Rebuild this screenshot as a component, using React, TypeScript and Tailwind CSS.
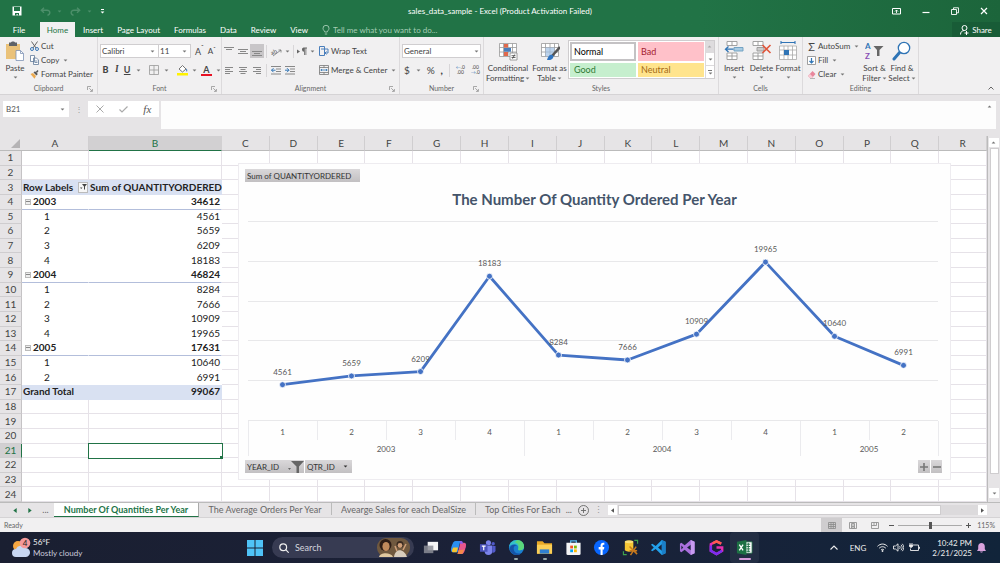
import type { ReactNode } from 'react';

const COLUMNS = ['A', 'B', 'C', 'D', 'E', 'F', 'G', 'H', 'I', 'J', 'K', 'L', 'M', 'N', 'O', 'P', 'Q', 'R'];

type PivotRow = { kind: 'head' | 'year' | 'quarter' | 'total'; label: string; value: string };

const YEARS = [
    { year: '2003', total: 34612, quarters: [4561, 5659, 6209, 18183] },
    { year: '2004', total: 46824, quarters: [8284, 7666, 10909, 19965] },
    { year: '2005', total: 17631, quarters: [10640, 6991] },
];

const PIVOT: PivotRow[] = [
    { kind: 'head', label: 'Row Labels', value: 'Sum of QUANTITYORDERED' },
    ...YEARS.flatMap((y): PivotRow[] => [
        { kind: 'year', label: y.year, value: String(y.total) },
        ...y.quarters.map((q, i): PivotRow => ({ kind: 'quarter', label: String(i + 1), value: String(q) })),
    ]),
    { kind: 'total', label: 'Grand Total', value: '99067' },
];

function Caret({ className = 'text-[#777]' }: { className?: string }) {
    return (
        <svg className={`h-[3px] w-[5px] shrink-0 ${className}`} viewBox="0 0 5 3" fill="currentColor" aria-hidden="true">
            <path d="M0.6 0.4h3.800L2.500 2.400z" />
        </svg>
    );
}

function Launcher() {
    return (
        <svg className="h-[6px] w-[6px]" viewBox="0 0 6 6" fill="none" stroke="#888" strokeWidth="0.7">
            <path d="M0.5 4V0.5H4M2.2 2.2l3 3M5.4 3v2.4H3" />
        </svg>
    );
}

interface GroupProps {
    label: string;
    className: string;
    launcher?: boolean;
    children: ReactNode;
}

function Group({ label, className, launcher, children }: GroupProps) {
    return (
        <section aria-label={label} className={`flex shrink-0 flex-col border-r border-[#dcdadc] ${className}`}>
            <div className="flex flex-1 pt-[2px]">{children}</div>
            <div className="grid h-[11px] grid-cols-[10px_1fr_10px] items-center text-center text-[7px] text-[#666]">
                <span />
                <span>{label}</span>
                {launcher && (
                    <button aria-label={`${label} settings`}>
                        <Launcher />
                    </button>
                )}
            </div>
        </section>
    );
}

function SmallButton({ icon, label, caret }: { icon: ReactNode; label: string; caret?: boolean }) {
    return (
        <button className="flex h-[14px] items-center gap-[2px] whitespace-nowrap">
            {icon}
            <span>{label}</span>
            {caret && <span className="pl-[2px]"><Caret /></span>}
        </button>
    );
}

function BigButton({ icon, lines, caretBelow, className }: { icon: ReactNode; lines: string[]; caretBelow?: boolean; className: string }) {
    return (
        <button className={`flex flex-col items-center pt-[2px] leading-[10px] ${className}`}>
            <span className="mb-[2px] flex h-5 items-center">{icon}</span>
            {lines.map((line, i) => (
                <span key={line} className="flex items-center gap-px whitespace-nowrap">
                    {line}
                    {!caretBelow && i === lines.length - 1 && <Caret />}
                </span>
            ))}
            {caretBelow && <span className="pt-[3px]"><Caret /></span>}
        </button>
    );
}

function Divider() {
    return <span className="h-[13px] w-px bg-[#d8d6d8]" />;
}

function AlignIcon({ lines, className = '' }: { lines: string; className?: string }) {
    return (
        <button aria-label="Align" className={`flex h-[14px] w-[14px] items-center justify-center ${className}`}>
            <svg width="10" height="10" viewBox="0 0 10 10" stroke="#888" strokeWidth="1"><path d={lines} /></svg>
        </button>
    );
}

function TableIcon({ children }: { children?: ReactNode }) {
    return (
        <svg width="20" height="20" viewBox="0 0 20 20" fill="none">
            <path d="M1.5 2.5h17v13h-17zM1.5 6.5h17M1.5 11h17M5.5 2.5v13M10 2.5v13M14.5 2.5v13" fill="#fff" stroke="#999" strokeWidth="0.8" />
            {children}
        </svg>
    );
}

function TitleBar() {
    return (
        <div className="grid h-[22px] grid-cols-[1fr_auto_1fr] items-center">
            <div className="flex items-center pl-3">
                <button aria-label="Save" className="mr-[18px]">
                    <svg width="10" height="10" viewBox="0 0 10 10"><path d="M0.5 0.5h9v9h-9z" fill="#fff" /><path d="M2 1h6v4H2zM3 7h4v2.5H5.8V8H4.5v1.5H3z" fill="#217346" /></svg>
                </button>
                <button aria-label="Undo" className="flex items-center gap-[6px] text-[#4c8f6a]">
                    <svg width="11" height="9" viewBox="0 0 11 9" fill="none" stroke="currentColor" strokeWidth="1.4"><path d="M4 0.7L1.3 3.2 4 5.8M1.5 3.2H7c4 0 3.400 4.500 0.500 5" /></svg>
                    <Caret className="text-[#4c8f6a]" />
                </button>
                <button aria-label="Redo" className="ml-2 flex items-center gap-[6px] text-[#4c8f6a]">
                    <svg width="11" height="9" viewBox="0 0 11 9" fill="none" stroke="currentColor" strokeWidth="1.4"><path d="M7 0.7l2.700 2.500L7 5.800M9.500 3.200H4c-4 0-3.400 4.500-0.500 5" /></svg>
                    <Caret className="text-[#4c8f6a]" />
                </button>
                <button aria-label="Customize toolbar" className="ml-2 flex flex-col items-center gap-px">
                    <span className="h-px w-[3px] bg-white" />
                    <Caret className="text-white" />
                </button>
            </div>
            <h1 className="text-[8px]">sales_data_sample - Excel (Product Activation Failed)</h1>
            <div className="flex items-center justify-end gap-[21px] pr-3 text-white">
                <button aria-label="Ribbon display options">
                    <svg width="9" height="8" viewBox="0 0 9 8" fill="none" stroke="currentColor"><path d="M0.500 1.500h8v5.500h-8z" /><path d="M4.500 6V3M3 4.500l1.500-1.500L6 4.500" strokeWidth="0.9" /></svg>
                </button>
                <button aria-label="Minimize"><svg width="8" height="8" viewBox="0 0 8 8"><path d="M0.500 5.500h7" stroke="currentColor" strokeWidth="1.200" /></svg></button>
                <button aria-label="Restore">
                    <svg width="8" height="8" viewBox="0 0 8 8" fill="none" stroke="currentColor" strokeWidth="0.900"><path d="M0.500 2.500h5v5h-5zM2.500 2.500V0.800h5v5H5.500" /></svg>
                </button>
                <button aria-label="Close"><svg width="8" height="8" viewBox="0 0 8 8"><path d="M1 1l6 6M7 1L1 7" stroke="currentColor" strokeWidth="1.200" /></svg></button>
            </div>
        </div>
    );
}

function RibbonTabs() {
    const after = ['Insert', 'Page Layout', 'Formulas', 'Data', 'Review', 'View'];
    return (
        <nav className="flex h-[15px] items-stretch text-[8px]">
            <button className="w-10 pr-[2px]">File</button>
            <button className="w-[35px] bg-[#f1f1f1] text-[#217346]">Home</button>
            <div className="ml-2 flex items-center gap-[14px]">
                {after.map((t) => <button key={t}>{t}</button>)}
                <label className="flex items-center gap-[3px] text-[#a5cdb5]">
                    <svg width="8" height="10" viewBox="0 0 8 10" fill="none" stroke="currentColor" strokeWidth="0.900"><path d="M2.700 7C2.700 5.700 1 5.200 1 3.300a3 3 0 0 1 6 0C7 5.200 5.300 5.700 5.300 7zM2.800 9h2.400" /></svg>
                    <input className="w-[120px] bg-transparent outline-none placeholder:text-[#a5cdb5]" placeholder="Tell me what you want to do..." />
                </label>
            </div>
            <button className="ml-auto flex w-12 items-center justify-center gap-[3px] bg-[#185c37]">
                <svg width="9" height="10" viewBox="0 0 9 10" fill="none" stroke="#fff" strokeWidth="1"><circle cx="4.500" cy="3" r="2.500" /><path d="M0.500 9.500C0.500 7 2 5.500 4.500 5.500M6.500 6v4M4.500 8h4" /></svg>
                Share
            </button>
        </nav>
    );
}

function Ribbon() {
    return (
        <div className="flex h-[58px] overflow-hidden border-b border-[#d5d3d5] bg-[#f1f0f1] text-[8px] text-[#444]">
            <Group label="Clipboard" className="w-[98px]" launcher>
                <BigButton
                    className="w-[30px]"
                    lines={['Paste']}
                    caretBelow
                    icon={
                        <svg width="18" height="20" viewBox="0 0 18 20">
                            <path d="M0 3h14v15H0z" fill="#eac27a" /><path d="M3 1.500h2C5.200 0.300 8.800 0.300 9 1.500h2V5H3z" fill="#5f6368" />
                            <path d="M10 9.500h4.500l3 3V19.500H10z" fill="#fff" stroke="#7f93b5" strokeWidth="0.800" /><path d="M14.500 9.500v3h3" fill="none" stroke="#7f93b5" strokeWidth="0.800" />
                        </svg>
                    }
                />
                <div className="flex flex-col items-start">
                    <SmallButton label="Cut" icon={<svg width="9" height="10" viewBox="0 0 9 10" fill="none"><path d="M1.500 0.500L6 7M7.500 0.500L3 7" stroke="#666" /><circle cx="2" cy="8" r="1.500" stroke="#3b78b8" /><circle cx="7" cy="8" r="1.500" stroke="#3b78b8" /></svg>} />
                    <SmallButton label="Copy" caret icon={<svg width="9" height="10" viewBox="0 0 9 10" fill="#fff" stroke="#5f7899" strokeWidth="0.800"><path d="M0.500 0.500h4v6h-4zM3.500 3h3l2 2v4.500h-5z" /><path d="M4.500 6h3M4.500 7.500h3" /></svg>} />
                    <SmallButton label="Format Painter" icon={<svg width="9" height="9" viewBox="0 0 9 9"><path d="M0.500 4L3 3l3 3-1.500 2.800z" fill="#eba94f" /><path d="M3.500 2.500L5 1.200l2.800 2.800L6.500 5.500z" fill="#555" /><path d="M6.300 2.500L8 0.500" stroke="#555" strokeWidth="1.500" /></svg>} />
                </div>
            </Group>

            <Group label="Font" className="w-[124px]" launcher>
                <div className="flex w-full flex-col gap-[5px] pl-[2px] pt-[5px]">
                    <div className="flex items-center">
                        <label className="relative flex items-center">
                            <select aria-label="Font name" className="h-[14px] w-[59px] appearance-none border border-[#d0ced0] bg-white pl-px"><option>Calibri</option></select>
                            <span className="pointer-events-none absolute right-1"><Caret /></span>
                        </label>
                        <label className="relative flex items-center">
                            <select aria-label="Font size" className="h-[14px] w-8 appearance-none border border-l-0 border-[#d0ced0] bg-white pl-px"><option>11</option></select>
                            <span className="pointer-events-none absolute right-1"><Caret /></span>
                        </label>
                        <button className="ml-1 text-[9px] leading-none">A<sup>ˆ</sup></button>
                        <button className="ml-1 text-[8px] leading-none">A<sup>ˇ</sup></button>
                    </div>
                    <div className="flex h-[14px] items-center">
                        <button className="w-[14px] text-[9px] font-black">B</button>
                        <button className="w-[14px] font-serif text-[9px] font-bold italic">I</button>
                        <button className="mr-1 w-3 text-[9px] font-bold underline">U</button>
                        <Caret />
                        <span className="ml-1 mr-1"><Divider /></span>
                        <button aria-label="Borders" className="mr-[5px]"><svg width="10" height="10" viewBox="0 0 10 10" fill="none" stroke="#999" strokeWidth="0.800"><path d="M0.500 0.500h9v9h-9zM5 0.500v9M0.500 5h9" /></svg></button>
                        <Caret />
                        <span className="ml-1 mr-1"><Divider /></span>
                        <button aria-label="Fill color" className="mr-1">
                            <svg width="11" height="12" viewBox="0 0 11 12"><path d="M2 5l3.500-3.500L9 5 5.500 8z" fill="#fff" stroke="#666" strokeWidth="0.900" /><path d="M9.300 4.500c1.200 1 1.200 2.500 0.600 3.300-0.800-0.700-1-2-0.600-3.300z" fill="#3b78b8" /><path d="M0 9h11v2.500H0z" fill="#fff200" /></svg>
                        </button>
                        <Caret />
                        <button aria-label="Font color" className="mx-1 flex flex-col items-center text-[9px] font-bold leading-[9px]">A<span className="h-[2px] w-[11px] bg-[#e81123]" /></button>
                        <Caret />
                    </div>
                </div>
            </Group>

            <Group label="Alignment" className="w-[178px]" launcher>
                <div className="grid w-full grid-cols-[44px_53px_1fr] content-start gap-y-[5px] pt-[5px]">
                    <div className="flex items-center">
                        <AlignIcon lines="M0 1.500h10M2 3.500h6" />
                        <AlignIcon lines="M0 3.500h10M2 5.500h6M0 7.500h10" />
                        <AlignIcon lines="M0 5.500h10M2 7.500h6M0 9.500h10" className="bg-[#c8c6c8]" />
                    </div>
                    <div className="flex items-center gap-[3px]">
                        <Divider />
                        <svg className="shrink-0" width="12" height="11" viewBox="0 0 12 11"><text x="1" y="8" fontSize="6" fill="#555" transform="rotate(-25 4 7)">ab</text><path d="M3 10l8-6M8.500 4H11v2.500" fill="none" stroke="#777" strokeWidth="0.800" /></svg>
                        <Caret />
                        <Divider />
                        <button aria-label="Text direction">
                            <svg width="10" height="9" viewBox="0 0 10 9" fill="#666"><path d="M0 2.500l3 2-3 2zM6.500 0.500H10v1H9.300V8h-0.800V1.500h-0.700V8H7V4.800a2.200 2.200 0 0 1-0.500-4.300z" /></svg>
                        </button>
                        <Caret />
                    </div>
                    <SmallButton label="Wrap Text" icon={<svg width="10" height="10" viewBox="0 0 10 10" fill="none"><path d="M0.500 0.500h5v9h-5M0.500 0.500v9M2 3h7v4H6M7.500 5.500L6 7l1.500 1.500" stroke="#4a7ebb" /></svg>} />
                    <div className="flex items-center">
                        <AlignIcon lines="M1 2.500h8M1 4.500h5M1 6.500h8M1 8.500h5" />
                        <AlignIcon lines="M1 2.500h8M2.500 4.500h5M1 6.500h8M2.500 8.500h5" />
                        <AlignIcon lines="M1 2.500h8M4 4.500h5M1 6.500h8M4 8.500h5" />
                    </div>
                    <div className="flex items-center gap-1">
                        <Divider />
                        <svg width="10" height="10" viewBox="0 0 10 10" fill="none"><path d="M0 1.500h10M5 4h5M5 6.500h5M0 9h10" stroke="#888" /><path d="M4.500 5.200H0.500M2.500 3.200l-2 2 2 2" stroke="#2f74b5" /></svg>
                        <svg width="10" height="10" viewBox="0 0 10 10" fill="none"><path d="M0 1.500h10M5 4h5M5 6.500h5M0 9h10" stroke="#888" /><path d="M0 5.200h4M2 3.200l2 2-2 2" stroke="#2f74b5" /></svg>
                    </div>
                    <SmallButton label="Merge & Center" caret icon={<svg width="10" height="10" viewBox="0 0 10 10" fill="none"><path d="M0.500 0.500h9v9h-9zM0.500 2.500h9M0.500 7.500h9M5 0.500v2M5 7.500v2" stroke="#777" strokeWidth="0.800" /><path d="M1.500 5h7M3 4L2 5l1 1M7 4l1 1-1 1" stroke="#2f74b5" strokeWidth="0.800" /></svg>} />
                </div>
            </Group>

            <Group label="Number" className="w-[84px]" launcher>
                <div className="flex w-full flex-col gap-[5px] px-[2px] pt-[5px]">
                    <label className="relative flex items-center">
                        <select aria-label="Number format" className="h-[14px] w-full appearance-none border border-[#d0ced0] bg-white pl-px"><option>General</option></select>
                        <span className="pointer-events-none absolute right-[2px]"><Caret /></span>
                    </label>
                    <div className="flex h-[14px] items-center justify-between pl-[2px] pr-px">
                        <button className="text-[10px]">$</button>
                        <Caret />
                        <button className="text-[10px]">%</button>
                        <button className="text-[10px] font-black">,</button>
                        <Divider />
                        <button className="text-[5px] leading-[5px]"><span className="text-[#2f74b5]">←</span>.0<br />.00</button>
                        <button className="text-[5px] leading-[5px]">.00<br /><span className="text-[#2f74b5]">→</span>.0</button>
                    </div>
                </div>
            </Group>

            <Group label="Styles" className="w-[235px]">
                <BigButton
                    className="w-12"
                    lines={['Conditional', 'Formatting']}
                    icon={<TableIcon><path d="M6 3h4v3.500H6zM6 11h4v4H6z" fill="#e0694c" /><path d="M6 7h7v3.700H6z" fill="#4a7ebb" /><path d="M12 12h7v7h-7z" fill="#fff" stroke="#888" strokeWidth="0.800" /><path d="M13.500 14.700h4M13.500 16.500h4M16.700 13.500l-2.200 4.200" stroke="#444" strokeWidth="0.800" /></TableIcon>}
                />
                <BigButton
                    className="w-[35px]"
                    lines={['Format as', 'Table']}
                    icon={<TableIcon><path d="M5.500 6.500h9v9h-9z" fill="#9fc0e4" fillOpacity="0.700" /><path d="M20 6l-8 9" stroke="#555" strokeWidth="2.500" /><path d="M7 19c1-4 3-6 5.500-5l1 1.500C13 18.500 10 19.500 7 19z" fill="#2f74c0" /></TableIcon>}
                />
                <div className="mb-1 ml-[1px] mt-px flex w-[147px] border border-[#cfcdcf] bg-white">
                    <div className="grid flex-1 grid-cols-2 gap-[2px] p-px text-left text-[9px]">
                        <button className="border-2 border-[#c4c2c4] bg-white pl-[2px] text-left text-black">Normal</button>
                        <button className="bg-[#ffc1c9] pl-[3px] text-left text-[#a3202f]">Bad</button>
                        <button className="bg-[#c6efce] pl-1 text-left text-[#2f7a35]">Good</button>
                        <button className="bg-[#ffe48d] pl-[3px] text-left text-[#a56a14]">Neutral</button>
                    </div>
                    <div className="flex w-[9px] flex-col border-l border-[#dcdadc]">
                        <button aria-label="Previous styles" className="flex flex-1 rotate-180 items-center justify-center bg-[#dedcde]"><Caret className="text-[#aaa]" /></button>
                        <button aria-label="Next styles" className="flex flex-1 items-center justify-center border-b border-[#dcdadc]"><Caret /></button>
                        <button aria-label="More styles" className="flex flex-1 flex-col items-center justify-center gap-px"><span className="h-px w-1 bg-[#777]" /><Caret /></button>
                    </div>
                </div>
            </Group>

            <Group label="Cells" className="w-[84px]">
                <BigButton className="w-[30px]" lines={['Insert']} caretBelow icon={<svg width="20" height="20" viewBox="0 0 20 20" fill="#fff" stroke="#999" strokeWidth="0.900"><path d="M3 0.500h10v4H3zM8 0.500v4M3 12h10v6.500H3zM8 12v6.500M3 15h10" /><path d="M10 6.500h9v3.500h-9z" fill="#a9cce3" stroke="#6b9dc0" /><path d="M9.500 8.200H1.500M4.500 5.500l-3 2.700 3 2.800" fill="none" stroke="#2f74b5" strokeWidth="1.300" /></svg>} />
                <BigButton className="w-[25px]" lines={['Delete']} caretBelow icon={<svg width="20" height="20" viewBox="0 0 20 20" fill="#fff" stroke="#999" strokeWidth="0.900"><path d="M1 0.500h10v4H1zM6 0.500v4M1 12h10v6.500H1zM6 12v6.500M1 15h10" /><path d="M5 6.500h7v3.500H5z" fill="#ccc" /><path d="M10.500 4l8 8M18.500 4l-8 8" stroke="#e0553a" strokeWidth="1.600" /></svg>} />
                <BigButton className="w-7" lines={['Format']} caretBelow icon={<svg width="20" height="20" viewBox="0 0 20 20" fill="#fff" stroke="#aaa" strokeWidth="0.800"><path d="M1.500 5h17v13.500h-17zM1.500 9h17M1.500 14h17M6 5v13.500M10 5v13.500M14.500 5v13.500" /><path d="M6 9h5v5H6z" fill="#2f74b5" stroke="none" /><path d="M3 1.500h14M3 0v3M17 0v3" stroke="#2f74b5" strokeWidth="1.100" /></svg>} />
            </Group>

            <Group label="Editing" className="w-[116px]">
                <div className="flex w-[58px] shrink-0 flex-col items-start pl-1">
                    <SmallButton label="AutoSum" caret icon={<span className="w-[9px] text-[11px] leading-none">Σ</span>} />
                    <SmallButton label="Fill" caret icon={<svg width="9" height="9" viewBox="0 0 9 9" fill="none"><path d="M0.500 0.500h8v8h-8z" fill="#fff" stroke="#888" strokeWidth="0.800" /><path d="M4.500 2v5M2.500 5l2 2 2-2" stroke="#2f74b5" strokeWidth="1.200" /></svg>} />
                    <SmallButton label="Clear" caret icon={<svg width="9" height="9" viewBox="0 0 9 9"><path d="M1 6l4.500-5L8.500 4 5 8H3z" fill="#e8879c" /><path d="M1 6l2-2 3 3-1 1H3z" fill="#f7ccd5" /><path d="M3 8.500h5" stroke="#999" strokeWidth="0.700" /></svg>} />
                </div>
                <BigButton className="w-[27px]" lines={['Sort &', 'Filter']} icon={<svg width="19" height="20" viewBox="0 0 19 20"><text x="0" y="8" fontSize="8" fontWeight="700" fill="#2f74b5">A</text><text x="0" y="18" fontSize="8" fontWeight="700" fill="#8a4fb5">Z</text><path d="M8.500 5h10l-4 4v6h-2.500V9z" fill="#666" /></svg>} />
                <BigButton className="w-7" lines={['Find &', 'Select']} icon={<svg width="20" height="20" viewBox="0 0 20 20"><path d="M8 11l-6 7" stroke="#2f74b5" strokeWidth="3" strokeLinecap="round" /><circle cx="12" cy="7" r="5.700" fill="#fff" stroke="#2f74b5" strokeWidth="1.300" /></svg>} />
            </Group>
            <button aria-label="Collapse ribbon" className="mb-1 ml-auto mr-[6px] self-end">
                <svg width="6" height="4" viewBox="0 0 6 4" fill="none" stroke="#666"><path d="M0.500 3.500L3 1l2.500 2.500" /></svg>
            </button>
        </div>
    );
}

function FormulaBar() {
    return (
        <div className="flex h-[41px] items-start bg-[#e6e4e6] pl-[3px] pr-1 pt-[6px] text-[8px] text-[#555]">
            <label className="flex h-4 w-[66px] items-center bg-white pl-[3px] pr-1">
                <input aria-label="Name box" defaultValue="B21" className="min-w-0 flex-1 outline-none" />
                <Caret />
            </label>
            <span className="w-[19px] text-center leading-4 text-[#999]">⋮</span>
            <div className="flex h-4 w-[71px] items-center justify-around bg-white">
                <button aria-label="Cancel"><svg width="8" height="8" viewBox="0 0 8 8" stroke="#aaa"><path d="M0.500 0.500l7 7M7.500 0.500l-7 7" /></svg></button>
                <button aria-label="Enter"><svg width="9" height="7" viewBox="0 0 9 7" fill="none" stroke="#aaa" strokeWidth="1.200"><path d="M0.500 3.500L3 6l5.500-5.500" /></svg></button>
                <button className="font-['Liberation_Serif',serif] text-[11px] italic leading-none">fx</button>
            </div>
            <div className="ml-[2px] flex h-7 flex-1 bg-[#fdfdfd]">
                <input aria-label="Formula" className="min-w-0 flex-1 bg-transparent px-1 outline-none" />
                <span className="rotate-180 self-start p-[4px]"><Caret /></span>
            </div>
        </div>
    );
}

function PivotCells({ row }: { row: PivotRow }) {
    const shaded = row.kind === 'head' || row.kind === 'total';
    const tone = shaded
        ? 'bg-[#d9e1f2] border-[#d9e1f2] font-bold'
        : row.kind === 'year'
            ? 'border-b-[#b3bedb] border-r-white font-bold'
            : 'border-white';
    return (
        <>
            <td className={`border-b border-r p-0 ${tone}`}>
                <div className={`flex items-center whitespace-nowrap ${row.kind === 'quarter' ? 'pl-[22px]' : row.kind === 'year' ? 'pl-[3px]' : 'pl-px'}`}>
                    {row.kind === 'year' && (
                        <button aria-label={`Collapse ${row.label}`} className="mr-[2px] flex h-[6px] w-[6px] items-center justify-center border border-[#bbb] bg-[#eee]">
                            <span className="h-px w-1 bg-[#888]" />
                        </button>
                    )}
                    {row.label}
                    {row.kind === 'head' && (
                        <button aria-label="Filter rows" className="ml-auto flex h-[11px] w-[10px] items-center justify-center border border-[#bbb] bg-[#f6f6f6]">
                            <svg width="7" height="6" viewBox="0 0 7 6" fill="#444"><path d="M2 0h5L5 2.500V6L4 5V2.500zM0 3.500h2.500L1.200 5z" /></svg>
                        </button>
                    )}
                </div>
            </td>
            <td className={`whitespace-nowrap border-b border-r p-0 ${tone} ${row.kind === 'head' ? 'pl-px text-left' : 'pr-px text-right'}`}>{row.value}</td>
        </>
    );
}

function Sheet() {
    return (
        <table className="h-full w-full table-fixed border-separate border-spacing-0 bg-white text-[10px] leading-[13px] text-[#222]">
            <colgroup>
                <col className="w-[22px]" />
                <col className="w-[67px]" />
                <col className="w-[133px]" />
            </colgroup>
            <thead>
                <tr className="h-[15px] bg-[#e6e4e6] text-[#444]">
                    <th className="border-b border-[#bbb] p-0" aria-label="Select all">
                        <svg className="ml-auto mr-[2px]" width="9" height="9" viewBox="0 0 9 9" fill="#b5b3b5"><path d="M9 0v9H0z" /></svg>
                    </th>
                    {COLUMNS.map((c) => (
                        <th key={c} scope="col" className={`border-r border-b p-0 font-normal ${c === 'B' ? 'border-b-[#217346] border-r-[#d2d0d2] bg-[#d2d0d2] text-[#217346]' : 'border-b-[#bbb] border-r-[#d0ced0]'}`}>{c}</th>
                    ))}
                </tr>
            </thead>
            <tbody>
                {Array.from({ length: 24 }, (_, i) => i + 1).map((n) => {
                    const pivot = PIVOT[n - 3];
                    return (
                        <tr key={n}>
                            <th scope="row" className={`border-b border-r border-b-[#cfcdcf] p-0 font-normal ${n === 21 ? 'border-r-[#217346] bg-[#d2d0d2] text-[#217346]' : 'border-r-[#c5c3c5] bg-[#e6e4e6] text-[#444]'}`}>{n}</th>
                            {COLUMNS.map((c, ci) => {
                                if (pivot && ci < 2) return ci === 0 ? <PivotCells key={c} row={pivot} /> : null;
                                if (n === 21 && c === 'B') {
                                    return (
                                        <td key={c} className="relative p-0 outline outline-[#217346]">
                                            <span className="absolute -bottom-px -right-px h-[3px] w-[3px] bg-[#217346]" />
                                        </td>
                                    );
                                }
                                return <td key={c} className="border-b border-r border-[#e6e2e8] p-0" />;
                            })}
                        </tr>
                    );
                })}
            </tbody>
        </table>
    );
}

const STEP = 69;
const LEFT = 3;
const AXIS = 209;
const yOf = (v: number) => AXIS - (v / 25000) * 199;

function LineChart() {
    const values = YEARS.flatMap((y) => y.quarters);
    const points = values.map((v, i) => ({ v, x: LEFT + STEP * (i + 0.5), y: yOf(v) }));
    let start = 0;
    const years = YEARS.map((y) => {
        const from = start;
        start += y.quarters.length;
        return { ...y, from, mid: LEFT + STEP * (from + y.quarters.length / 2) };
    });
    return (
        <svg viewBox="0 0 699 248" className="min-h-0 w-full flex-1" fontSize="8" fill="#595959" textAnchor="middle" role="img" aria-label="The Number Of Quantity Ordered Per Year">
            {[0, 5000, 10000, 15000, 20000, 25000].map((v) => (
                <path key={v} d={`M${LEFT} ${Math.round(yOf(v)) - 0.5}h${STEP * 10}`} stroke="#e8e8ea" />
            ))}
            {Array.from({ length: 11 }, (_, i) => (
                <path key={i} d={`M${LEFT + STEP * i + 0.5} ${AXIS}v${[0, 4, 8, 10].includes(i) ? 35 : 19}`} stroke="#ebebee" />
            ))}
            <polyline points={points.map((p) => `${p.x},${p.y}`).join(' ')} fill="none" stroke="#4472c4" strokeWidth="2.800" strokeLinejoin="round" />
            {points.map((p) => (
                <g key={p.v}>
                    <circle cx={p.x} cy={p.y} r="3" fill="#4472c4" stroke="#fff" strokeWidth="0.800" />
                    <text x={p.x} y={p.y - 10}>{p.v}</text>
                </g>
            ))}
            {years.map((y) => (
                <g key={y.year}>
                    {y.quarters.map((_, i) => <text key={i} x={LEFT + STEP * (y.from + i + 0.5)} y="223">{i + 1}</text>)}
                    <text x={y.mid} y="240">{y.year}</text>
                </g>
            ))}
        </svg>
    );
}

function ChartPanel() {
    const chip = 'flex h-[13px] items-center bg-linear-to-b from-[#dad8da] to-[#c2c0c2] text-[8px] text-[#333]';
    return (
        <div className="absolute bottom-[22px] left-[238px] right-9 top-[27px] flex flex-col border border-[#eeecf0] bg-[#fefefe] px-[6px] pb-[6px] pt-[5px]">
            <button className={`${chip} w-[115px] px-[2px]`}>Sum of QUANTITYORDERED</button>
            <h2 className="h-[30px] pt-[5px] text-center text-[15px] font-bold leading-6 text-[#44546a]">The Number Of Quantity Ordered Per Year</h2>
            <LineChart />
            <div className="flex">
                <button className={`${chip} w-[59px] justify-between pl-[2px]`}>
                    YEAR_ID
                    <svg width="16" height="12" viewBox="0 0 16 12" fill="#666"><path d="M3 0h13l-5 5.500V12H8.500V5.500zM0 7h3L1.500 9z" /></svg>
                </button>
                <button className={`${chip} ml-px w-[47px] justify-between pl-[2px] pr-1`}>QTR_ID<Caret className="text-[#333]" /></button>
                <button aria-label="Expand" className={`${chip} ml-auto w-3 justify-center`}>
                    <svg width="8" height="8" viewBox="0 0 8 8" stroke="#777" strokeWidth="1.600"><path d="M4 0v8M0 4h8" /></svg>
                </button>
                <button aria-label="Collapse" className={`${chip} ml-px mr-[2px] w-[11px] justify-center`}>
                    <svg width="8" height="8" viewBox="0 0 8 8" stroke="#777" strokeWidth="1.600"><path d="M0 4h8" /></svg>
                </button>
            </div>
        </div>
    );
}

function VerticalScroll() {
    return (
        <div className="flex w-[13px] flex-col items-center border-l border-[#bbb] bg-[#e6e4e6] px-px pt-[2px]">
            <button aria-label="Scroll up" className="flex h-[9px] w-full rotate-180 items-center justify-center bg-white"><Caret /></button>
            <div className="mt-px w-[9px] flex-1 border border-[#cfcdcf] bg-white" />
            <div className="h-[14px]" />
            <button aria-label="Scroll down" className="mb-1 flex h-[10px] w-full items-center justify-center bg-white"><Caret /></button>
        </div>
    );
}

function SheetTabs() {
    return (
        <div className="flex h-[15px] items-stretch border-t border-[#bbb] bg-[#e6e4e6] text-[9px] text-[#666]">
            <div className="flex w-[54px] items-center justify-around pl-2 text-[#217346]">
                <button aria-label="Previous sheet"><svg width="4" height="5" viewBox="0 0 4 6" fill="currentColor"><path d="M4 0v6L0 3z" /></svg></button>
                <button aria-label="Next sheet"><svg width="4" height="5" viewBox="0 0 4 6" fill="currentColor"><path d="M0 0v6l4-3z" /></svg></button>
                <span className="text-[#666]">...</span>
            </div>
            <button className="w-[145px] whitespace-nowrap border-b border-r border-b-[#217346] border-r-[#aaa] bg-white pb-px font-bold leading-none text-[#217346]">Number Of Quantities Per Year</button>
            <button className="mb-[2px] w-[133px] whitespace-nowrap border-r border-[#bbb] leading-none">The Average Orders Per Year</button>
            <button className="mb-[2px] w-36 whitespace-nowrap border-r border-[#bbb] leading-none">Avearge Sales for each DealSize</button>
            <button className="mb-[2px] flex w-[102px] items-center justify-between whitespace-nowrap pl-[9px] pr-[6px] leading-none"><span>Top Cities For Each</span><span>...</span></button>
            <button aria-label="New sheet" className="self-center">
                <svg width="11" height="11" viewBox="0 0 11 11" fill="none" stroke="#666" strokeWidth="0.900"><circle cx="5.500" cy="5.500" r="5" /><path d="M5.500 3v5M3 5.500h5" /></svg>
            </button>
            <span className="w-[19px] text-center leading-[13px] text-[#999]">⋮</span>
            <div className="my-[2px] mr-[13px] flex flex-1">
                <button aria-label="Scroll left" className="flex w-[9px] items-center justify-center bg-white"><svg width="3" height="5" viewBox="0 0 4 6" fill="#555"><path d="M4 0v6L0 3z" /></svg></button>
                <div className="ml-px flex-1 border border-[#cfcdcf] bg-white" />
                <div className="w-[37px] bg-[#dcdadc]" />
                <button aria-label="Scroll right" className="flex w-[9px] items-center justify-center bg-white"><svg width="3" height="5" viewBox="0 0 4 6" fill="#555"><path d="M0 0v6l4-3z" /></svg></button>
            </div>
        </div>
    );
}

function StatusBar() {
    return (
        <div className="flex h-[15px] items-center border-t border-[#d5d3d5] bg-[#f1f0f1] pl-1 text-[7px] text-[#666]">
            Ready
            <div className="ml-auto flex h-full items-center">
                <button aria-label="Normal view" className="flex h-full w-[21px] items-center justify-center bg-[#cfcdcf]">
                    <svg width="8" height="7" viewBox="0 0 8 7" fill="none" stroke="#888" strokeWidth="0.800"><path d="M0.500 0.500h7v6h-7zM0.500 2.500h7M0.500 4.500h7M3 0.500v6M5.300 0.500v6" /></svg>
                </button>
                <button aria-label="Page layout view" className="flex w-[22px] justify-center">
                    <svg width="8" height="7" viewBox="0 0 8 7" fill="none" stroke="#888" strokeWidth="0.800"><path d="M0.500 0.500h7v6h-7zM2.500 1.500h3v4.500h-3zM3 3h2M3 4.500h2" /></svg>
                </button>
                <button aria-label="Page break view" className="flex w-[21px] justify-center">
                    <svg width="8" height="7" viewBox="0 0 8 7" fill="none" stroke="#888" strokeWidth="0.800"><path d="M0.500 0.500h7v6h-7zM3 0.500v3M5.500 0.500v3M0.500 3.500h5" /></svg>
                </button>
                <button aria-label="Zoom out" className="mx-1 h-px w-[5px] bg-[#555]" />
                <input type="range" aria-label="Zoom" min="10" max="220" defaultValue="115" className="h-[9px] w-[64px] appearance-none bg-linear-to-b from-transparent from-45% via-[#aaa] via-50% to-transparent to-55% [&::-webkit-slider-thumb]:h-[7px] [&::-webkit-slider-thumb]:w-[3px] [&::-webkit-slider-thumb]:appearance-none [&::-webkit-slider-thumb]:bg-[#555]" />
                <button aria-label="Zoom in" className="mx-[4px]"><svg width="5" height="5" viewBox="0 0 5 5" stroke="#555"><path d="M2.500 0v5M0 2.500h5" /></svg></button>
                <span className="w-[25px] pr-[5px] text-right">115%</span>
            </div>
        </div>
    );
}

const APPS: { name: string; art: ReactNode; running?: boolean }[] = [
    { name: 'Task view', art: <><path d="M6 3h11v9H6z" fill="#f4f4f6" /><path d="M2 7h10v8H2z" fill="#8b8d96" fillOpacity="0.850" /></> },
    { name: 'Copilot', art: <><path d="M6 2h5l-3 12H3C0 14 1 10 2 7s2-5 4-5z" fill="#2a8ff0" /><path d="M3.500 9h5L7 14H3C1.500 14 2 11 3.500 9z" fill="#f7c52d" /><path d="M12 16H8l3-12h4c3 0 2 4 1 7s-2 5-4 5z" fill="#e8568d" /><path d="M10 2h2c1.500 0 1.500 2 2 3h-3z" fill="#8b5cf0" /><path d="M8 16l1-4 6-1c-1 3-1.500 5-4 5z" fill="#f4894a" /></> },
    { name: 'Teams', art: <><circle cx="10" cy="4" r="2.700" fill="#7b83eb" /><circle cx="15" cy="5" r="1.800" fill="#5059c9" /><path d="M6 7h8v6a4 4 0 0 1-8 0z" fill="#7b83eb" /><path d="M14 7.500h3.500V12c0 2-1.500 3-3.500 2.500z" fill="#5059c9" /><path d="M1 5.500h8v8H1z" fill="#4b53bc" /><path d="M3 7.500h4M5 7.500v4.500" stroke="#fff" strokeWidth="1.200" /></> },
    { name: 'Edge', running: true, art: <><circle cx="9" cy="9" r="8" fill="#1b7fd0" /><path d="M1 9C1.500 4 5 1 9 1s8 3 8 7c0 3-2 4-4.500 4-2 0-2-1-1.500-2 0.500-2.500-1.500-4.500-4.500-4.500S1.500 7 1 9z" fill="#35c1c8" /><path d="M10 1c4 0 7 3 7 7 0 3-2 4-4.500 4-2 0-2-1-1.500-2 1-4-1-6-4-6.500z" fill="#5ad67a" /><path d="M6 10c0 4 3 6 8 5-2 2-5 2.500-7.500 1.500C3 15 1.500 12 2 9c1-3 5-4 8-2-2.500-0.500-4 1-4 3z" fill="#1553a6" /></> },
    { name: 'File Explorer', running: true, art: <><path d="M1 2.500h6l2 2h8v11H1z" fill="#e8a826" /><path d="M1 6h16v9.500H1z" fill="#fbcf57" /><path d="M4 11h10v4.500H4z" fill="#2f7fd0" /></> },
    { name: 'Microsoft Store', art: <><path d="M6 5V2h6v3" fill="none" stroke="#55b8f0" strokeWidth="1.300" /><path d="M1.500 4h15v11.500a1.500 1.500 0 0 1-1.500 1.500H3a1.500 1.500 0 0 1-1.500-1.500z" fill="#f3f4f6" /><path d="M5.500 7h3v3h-3z" fill="#f25022" /><path d="M9.500 7h3v3h-3z" fill="#7fba00" /><path d="M5.500 11h3v3h-3z" fill="#00a4ef" /><path d="M9.500 11h3v3h-3z" fill="#ffb900" /></> },
    { name: 'Facebook', art: <><circle cx="9" cy="9" r="8" fill="#0866ff" /><path d="M8 17v-6H6V8.500h2V7c0-2.500 1.500-3.500 4-3v2.200c-1.500-0.200-1.800 0.300-1.800 1.200v1.100H12l-0.400 2.500h-1.400v6z" fill="#fff" /></> },
    { name: 'SQL Developer', art: <><path d="M3 3c2-2 7-2 9 0v9c-2 2-7 2-9 0z" fill="#f5c534" /><ellipse cx="7.500" cy="3" rx="4.500" ry="1.500" fill="#fbe07a" /><path d="M13 1.500h3.500V5M1.500 13v3.500H5" fill="none" stroke="#3fa34d" strokeWidth="1.200" /><path d="M8 8l8 8M15 8l-6 9M8 12.500h8" stroke="#c9791d" strokeWidth="1.600" /></> },
    { name: 'Visual Studio Code', art: <><path d="M12.500 1L16.500 3v12l-4 2L6 10.500 2.500 13 1 12l3-3-3-3 1.500-1L6 7.500zM12.500 5.500L8.500 9l4 3.500z" fill="#23a0ea" fillRule="evenodd" /><path d="M12.500 1L16.500 3v12l-4 2z" fill="#1b7fc8" /></> },
    { name: 'Visual Studio', art: <><path d="M12.500 1L16.500 3v12l-4 2L6 11.500 2.500 14 1 13V5l1.500-1L6 6.500zM12.500 6L8.500 9l4 3zM2.500 7v4l2-2z" fill="#a970dc" fillRule="evenodd" /><path d="M12.500 1L16.500 3v12l-4 2z" fill="#c79bf0" /></> },
    { name: 'Designer', art: <><path d="M14 5L9 2.500 3 5.500v7L9 16l6-3.500V9H9" fill="none" stroke="#e62fae" strokeWidth="2.600" /><path d="M3 7v5.500L9 16l6-3.500" fill="none" stroke="#7a2df0" strokeWidth="2.600" /><path d="M14 5L9 2.500 5 4.500" fill="none" stroke="#ff5a4d" strokeWidth="2.600" /></> },
    { name: 'Excel', running: true, art: <><path d="M9 3h8v12H9z" fill="#fff" stroke="#1d7044" strokeWidth="0.800" /><path d="M11 5.500h4M11 8h4M11 10.500h4M11 13h4M13 4v10" stroke="#1d7044" /><path d="M1 3l10-2v16L1 15z" fill="#1d7044" /><path d="M3.500 6l4 6M7.500 6l-4 6" stroke="#fff" strokeWidth="1.400" /></> },
];

function Taskbar() {
    return (
        <footer className="grid h-[31px] shrink-0 grid-cols-[1fr_auto_1fr] items-center bg-linear-to-r from-[#1a1f31] via-[#1b2138] to-[#11243a] text-[8px] text-[#eee]">
            <button className="flex items-center gap-[2px] justify-self-start pl-3 text-left leading-[11px]">
                <svg width="19" height="21" viewBox="0 0 19 21">
                    <circle cx="6" cy="9" r="5" fill="#f5a742" />
                    <path d="M4 20a4 4 0 0 1 0-8 5 5 0 0 1 9-1 4.500 4.500 0 0 1 1 9z" fill="#c8d7f2" />
                    <circle cx="13" cy="6" r="5.300" fill="#f59a9a" />
                    <text x="13" y="9" textAnchor="middle" fontSize="8" fill="#222">4</text>
                </svg>
                <span>56°F<br /><span className="text-[#ccd]">Mostly cloudy</span></span>
            </button>
            <div className="flex h-full items-center pl-[6px]">
                <button aria-label="Start" className="mr-[9px]">
                    <svg width="16" height="16" viewBox="0 0 16 16" fill="#4fc3f7"><path d="M0 0h7.500v7.500H0zM8.500 0H16v7.500H8.500zM0 8.500h7.500V16H0zM8.500 8.500H16V16H8.500z" /></svg>
                </button>
                <label className="flex h-[21px] w-[142px] items-center gap-[6px] rounded-full bg-[#373b52] pl-[7px] pr-1">
                    <svg width="10" height="10" viewBox="0 0 10 10" fill="none" stroke="#eee" strokeWidth="1.200"><circle cx="4.200" cy="4.200" r="3.400" /><path d="M6.700 6.700l3 3" /></svg>
                    <input placeholder="Search" aria-label="Search" className="min-w-0 flex-1 bg-transparent text-[9px] outline-none placeholder:text-[#d5d6de]" />
                    <svg width="33" height="19" viewBox="0 0 33 19">
                        <rect width="33" height="19" rx="9" fill="#70593f" />
                        <circle cx="8.500" cy="7" r="6" fill="#2e1d16" /><ellipse cx="9" cy="8.500" rx="3.600" ry="4.600" fill="#c08a5c" /><path d="M2 19c1-5 12-5 14 0z" fill="#e0c9a0" />
                        <circle cx="23" cy="6.500" r="3.500" fill="#3a2a20" /><circle cx="23" cy="7.500" r="2.400" fill="#cf9f78" /><path d="M17 19c1-9 10-9 13 0z" fill="#d8cdbd" /><path d="M26 12l3-6M20 13l-2-5" stroke="#cf9f78" strokeWidth="1.500" />
                    </svg>
                </label>
                <div className="ml-[2px] flex h-full w-[343px]">
                    {APPS.map((app) => (
                        <button key={app.name} aria-label={app.name} className={`flex flex-1 flex-col items-center justify-center pt-[4px] ${app.name === 'Excel' ? 'rounded bg-white/5' : ''}`}>
                            <svg width="17" height="17" viewBox="0 0 18 18">{app.art}</svg>
                            <span className={`mt-[2px] h-[2px] rounded ${app.name === 'Excel' ? 'w-3 bg-[#d59ad8]' : app.running ? 'w-1 bg-[#9aa]' : 'w-1'}`} />
                        </button>
                    ))}
                </div>
            </div>
            <div className="flex items-center justify-end pr-[14px]">
                <button aria-label="Hidden icons" className="mr-3"><svg width="8" height="5" viewBox="0 0 8 5" fill="none" stroke="#eee" strokeWidth="1.100"><path d="M0.500 4.500L4 1l3.500 3.500" /></svg></button>
                <button className="mr-[11px]">ENG</button>
                <button aria-label="Network and sound" className="mr-3 flex items-center gap-[5px]">
                    <svg width="11" height="9" viewBox="0 0 11 9" fill="none" stroke="#eee"><path d="M0.500 3.300c3-3 7-3 10 0M2.200 5.200c2-2 4.600-2 6.600 0M4 7c1-1 2-1 3 0" /><circle cx="5.500" cy="8" r="0.600" fill="#eee" /></svg>
                    <svg width="11" height="9" viewBox="0 0 11 9" fill="none" stroke="#eee" strokeWidth="0.900"><path d="M0.500 3h2L5 0.800v7.400L2.500 6h-2zM6.500 3c0.800 1 0.800 2 0 3M8 1.800c1.500 1.800 1.500 3.600 0 5.400M9.300 0.800c2 2.400 2 5 0 7.400" /></svg>
                    <svg width="11" height="9" viewBox="0 0 11 9" fill="none" stroke="#eee" strokeWidth="0.900"><path d="M4 2h5.500v5.500h-8V5.500M10.500 3.800v2" /><path d="M1 0v2M3 0v2M0.500 2h3v1.500L2 4.500 0.500 3.500z" fill="#eee" /></svg>
                </button>
                <time className="mr-[5px] text-right leading-[10px]">10:42 PM<br />2/21/2025</time>
                <button aria-label="Notifications"><svg width="9" height="10" viewBox="0 0 9 10" fill="#d9a3dd"><path d="M4.500 0c2 0 3.300 1.500 3.300 3.500V6L9 8H0l1.200-2V3.500C1.200 1.500 2.500 0 4.500 0zM3 8.500h3c-0.300 1.300-2.700 1.300-3 0z" /></svg></button>
            </div>
        </footer>
    );
}

export default function App() {
    return (
        <div className="flex h-screen flex-col overflow-hidden bg-[#e6e4e6] font-['Lato','Open_Sans',sans-serif]">
            <header className="bg-linear-to-r from-[#217346] from-70% to-[#1c653b] text-white">
                <TitleBar />
                <RibbonTabs />
            </header>
            <Ribbon />
            <FormulaBar />
            <main className="flex min-h-0 flex-1">
                <div className="relative min-w-0 flex-1">
                    <Sheet />
                    <ChartPanel />
                </div>
                <VerticalScroll />
            </main>
            <SheetTabs />
            <StatusBar />
            <Taskbar />
        </div>
    );
}
